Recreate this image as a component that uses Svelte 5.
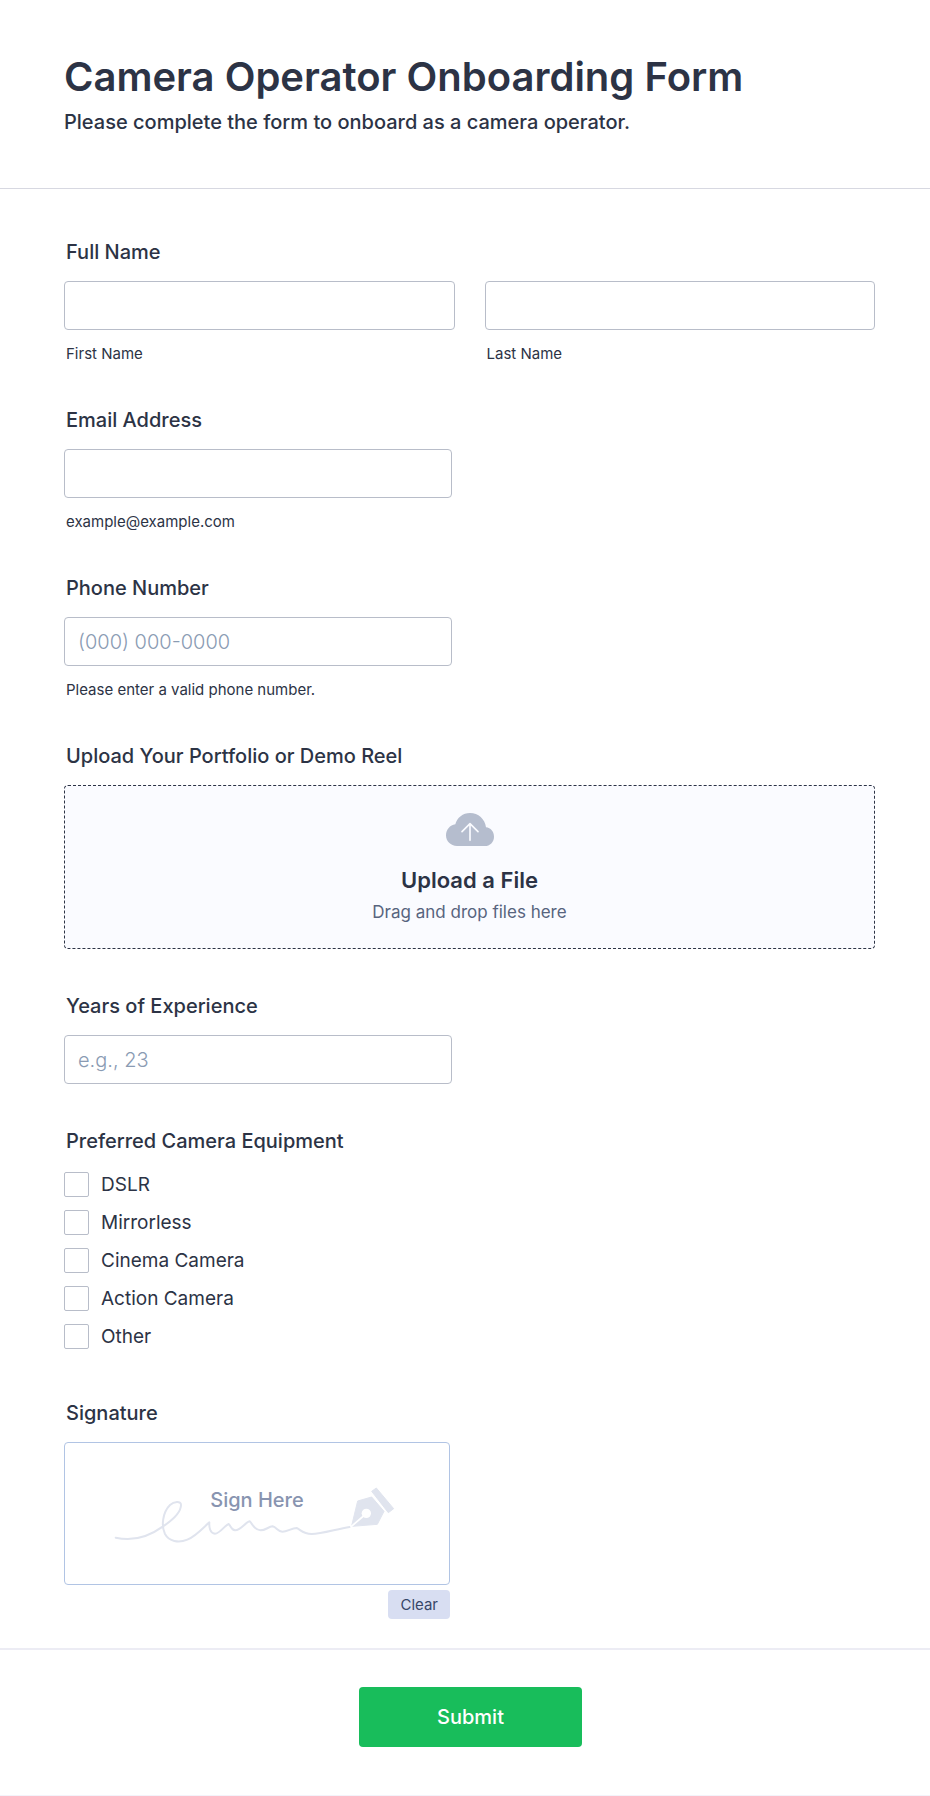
<script>
  const equipment = ['DSLR', 'Mirrorless', 'Cinema Camera', 'Action Camera', 'Other'];
  let selected = $state([]);
</script>

<form class="page" onsubmit={(e) => e.preventDefault()}>
  <header class="header">
    <h1>Camera Operator Onboarding Form</h1>
    <p>Please complete the form to onboard as a camera operator.</p>
  </header>

  <div class="fields">
    <fieldset class="field">
      <legend class="label">Full Name</legend>
      <div class="pair">
        <div class="control">
          <input id="first" type="text" />
          <label class="hint" for="first">First Name</label>
        </div>
        <div class="control">
          <input id="last" type="text" />
          <label class="hint" for="last">Last Name</label>
        </div>
      </div>
    </fieldset>

    <div class="field">
      <label class="label" for="email">Email Address</label>
      <div class="control half">
        <input id="email" type="email" aria-describedby="email-hint" />
        <span class="hint" id="email-hint">example@example.com</span>
      </div>
    </div>

    <div class="field">
      <label class="label" for="phone">Phone Number</label>
      <div class="control half">
        <input id="phone" type="tel" placeholder="(000) 000-0000" aria-describedby="phone-hint" />
        <span class="hint" id="phone-hint">Please enter a valid phone number.</span>
      </div>
    </div>

    <div class="field">
      <span class="label" id="upload-label">Upload Your Portfolio or Demo Reel</span>
      <button type="button" class="upload" aria-describedby="upload-label">
        <svg width="48" height="33" viewBox="318 129 144 99" aria-hidden="true">
          <path
            fill="#b5bdce"
            d="M351 228 C332 228 318 214 318 196 C318 179 330 165 346 163 C351 143 369 129 390 129 C415 129 435 147 438 172 C452 173 462 185 462 200 C462 216 450 228 434 228 Z"
          />
          <path
            fill="none"
            stroke="#fafbff"
            stroke-width="5"
            stroke-linecap="round"
            stroke-linejoin="round"
            d="M390 211 V161 M366 185 L390 161 L414 185"
          />
        </svg>
        <strong>Upload a File</strong>
        <span>Drag and drop files here</span>
      </button>
    </div>

    <div class="field">
      <label class="label" for="years">Years of Experience</label>
      <div class="control half">
        <input id="years" type="text" inputmode="numeric" placeholder="e.g., 23" />
      </div>
    </div>

    <fieldset class="field">
      <legend class="label">Preferred Camera Equipment</legend>
      <div class="choices">
        {#each equipment as item}
          <label class="choice">
            <input type="checkbox" value={item} bind:group={selected} />
            <span>{item}</span>
          </label>
        {/each}
      </div>
    </fieldset>

    <div class="field">
      <span class="label">Signature</span>
      <div class="signing">
        <div class="pad">
          <svg width="294" height="60" viewBox="30 40 882 180" aria-hidden="true">
            <path
              fill="none"
              stroke="#e0e4ee"
              stroke-width="6"
              stroke-linecap="round"
              stroke-linejoin="round"
              d="M47 201 C95 212 140 203 188 168 C215 150 243 125 243 103 C243 90 222 92 210 103 C188 125 183 165 195 190 C207 212 235 218 262 207 C290 195 310 170 328 155 C327 170 330 188 345 189 C360 189 375 163 386 160 C392 165 394 178 405 179 C422 180 436 155 449 152 C458 160 462 178 482 179 C497 179 505 168 518 167 C530 170 533 182 547 183 C562 183 575 172 590 172 C600 176 610 190 635 190 C665 190 710 175 749 169"
            />
            <g fill="#e0e4ee" stroke="#e0e4ee" stroke-width="3" stroke-linejoin="round">
              <path d="M755 165 L773 91 L815 79 L852 122 L832 161 L757 167 Z" />
              <path d="M815 62 L829 52 L881 114 L865 126 Z" />
            </g>
            <circle cx="799" cy="128" r="14" fill="#fff" />
            <path d="M752 169 L794 133" stroke="#fff" stroke-width="5" />
          </svg>
          <span>Sign Here</span>
        </div>
        <button type="button" class="clear">Clear</button>
      </div>
    </div>
  </div>

  <footer class="footer">
    <button type="submit" class="submit">Submit</button>
  </footer>
</form>

<style>
  :global(body) {
    background: #fff;
  }

  .page,
  .page * {
    box-sizing: border-box;
  }

  .page {
    font-family: Inter, sans-serif;
    color: #2c3345;
    border-bottom: 1px solid #f3f3fa;
  }

  button,
  input {
    font: inherit;
    color: inherit;
  }

  .header {
    padding: 52px 55px 53px 64px;
    border-bottom: 1px solid #d7d8e1;
  }

  h1 {
    margin: 0;
    font-size: 40px;
    line-height: 50px;
    font-weight: 600;
  }

  .header p {
    margin: 8px 0 0;
    font-size: 20px;
    line-height: 25px;
    font-weight: 500;
  }

  .fields {
    display: flex;
    flex-direction: column;
    gap: 45px;
    padding: 51px 55px 29px 64px;
  }

  .field {
    display: flex;
    flex-direction: column;
    min-width: 0;
    margin: 0;
    padding: 0;
    border: 0;
  }

  .label {
    margin-bottom: 17px;
    padding: 0 2px;
    font-size: 20px;
    line-height: 24px;
    font-weight: 500;
  }

  .pair {
    display: grid;
    grid-template-columns: 1fr 1fr;
    gap: 30px;
  }

  .control {
    display: flex;
    flex-direction: column;
    gap: 15px;
  }

  .half {
    width: 388px;
    max-width: 100%;
  }

  .control input {
    width: 100%;
    height: 49px;
    padding: 0 13px;
    border: 1px solid #b8bdc9;
    border-radius: 4px;
    background: #fff;
    font-size: 20px;
  }

  .control input::placeholder {
    color: #8a9bb3;
    font-weight: 300;
    opacity: 1;
  }

  .hint {
    padding: 0 2px;
    font-size: 15px;
    line-height: 18px;
  }

  .upload {
    display: flex;
    flex-direction: column;
    align-items: center;
    padding: 27px 16px 24px;
    border: 1px dashed #2c3345;
    border-radius: 4px;
    background: #fafbff;
  }

  .upload strong {
    margin-top: 20px;
    font-size: 22px;
    line-height: 28px;
    font-weight: 600;
  }

  .upload span {
    margin-top: 6px;
    font-size: 17px;
    line-height: 24px;
    color: #57647e;
  }

  .choices {
    display: flex;
    flex-direction: column;
    align-items: flex-start;
    gap: 13px;
    padding: 2px 0 7px;
  }

  .choice {
    display: flex;
    align-items: center;
    gap: 12px;
    font-size: 19px;
    line-height: 24px;
  }

  .choice input {
    appearance: none;
    width: 25px;
    height: 25px;
    margin: 0;
    border: 1px solid #b8bdc9;
    border-radius: 2px;
    background: #fff;
  }

  .choice input:checked {
    background: #2e69ff;
  }

  .signing {
    display: flex;
    flex-direction: column;
    align-items: flex-end;
    gap: 5px;
    width: 386px;
    max-width: 100%;
  }

  .pad {
    display: grid;
    width: 100%;
    padding: 41px 0 40px;
    justify-items: center;
    border: 1px solid #b1c4e4;
    border-radius: 4px;
  }

  .pad svg,
  .pad span {
    grid-area: 1 / 1;
  }

  .pad span {
    margin-top: 4px;
    font-size: 20px;
    line-height: 24px;
    font-weight: 500;
    color: #8894b0;
  }

  .clear {
    padding: 5px 12px;
    border: 0;
    border-radius: 4px;
    background: #d8def2;
    font-size: 15px;
    line-height: 19px;
    color: #374668;
  }

  .footer {
    display: flex;
    justify-content: center;
    padding: 37px 53px 48px 64px;
    border-top: 2px solid #ececf4;
  }

  .submit {
    min-width: 223px;
    padding: 18px;
    border: 0;
    border-radius: 4px;
    background: #18bd5b;
    font-size: 20px;
    line-height: 24px;
    font-weight: 500;
    color: #fff;
  }
</style>
